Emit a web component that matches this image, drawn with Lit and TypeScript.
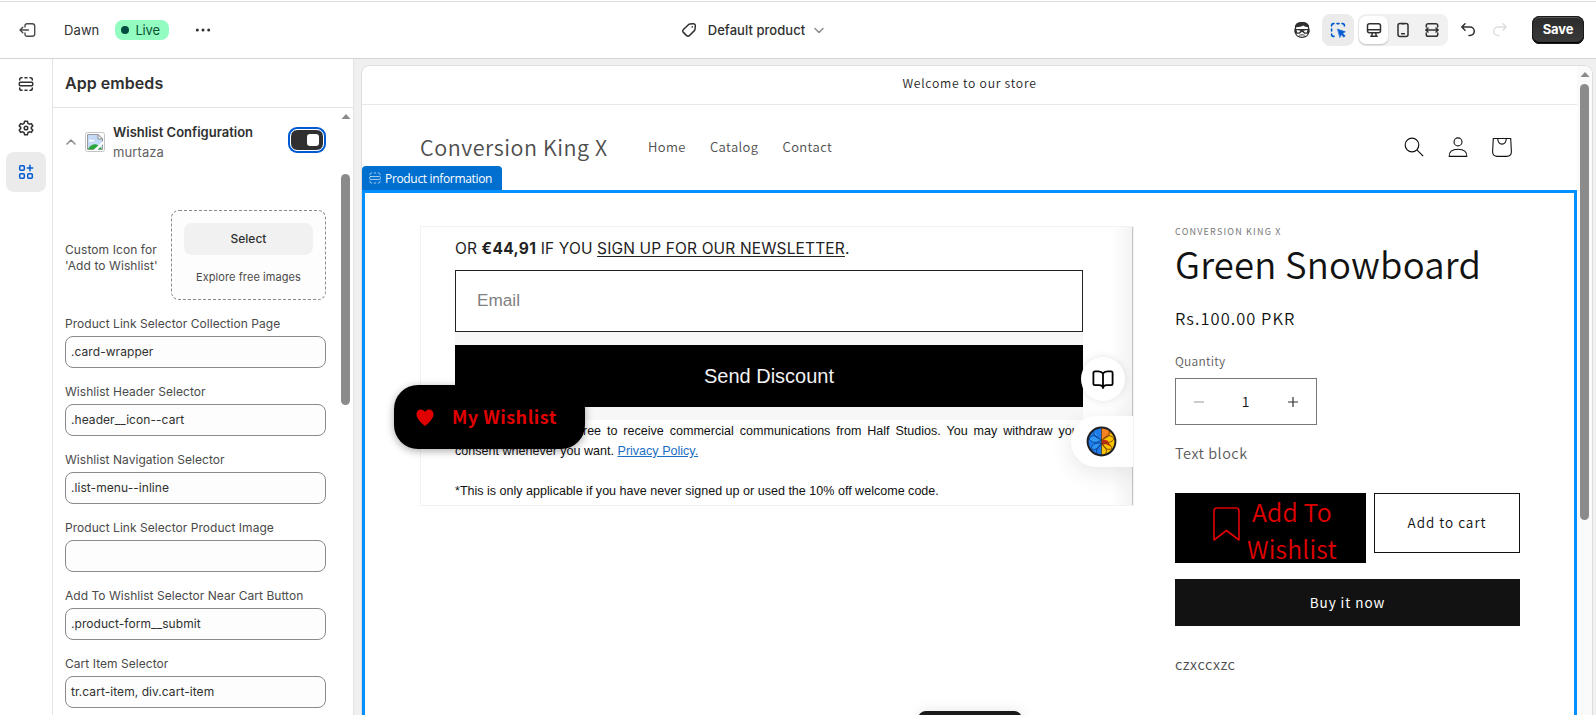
import { LitElement, html, css, svg } from "lit";
import { customElement } from "lit/decorators.js";

const FIELDS: Array<[string, string]> = [
  ["Product Link Selector Collection Page", ".card-wrapper"],
  ["Wishlist Header Selector", ".header__icon--cart"],
  ["Wishlist Navigation Selector", ".list-menu--inline"],
  ["Product Link Selector Product Image", ""],
  ["Add To Wishlist Selector Near Cart Button", ".product-form__submit"],
  ["Cart Item Selector", "tr.cart-item, div.cart-item"],
];

const icon = (size: number, body: unknown, stroke = "#303030", width = 1.5, box = 20) => html`
  <svg width=${size} height=${size} viewBox="0 0 ${box} ${box}" fill="none" stroke=${stroke}
    stroke-width=${width} stroke-linecap="round" stroke-linejoin="round">${body}</svg>`;

const exitIcon = svg`<path d="M7 7V5.800C7 4.500 7.900 3.700 9.200 3.700h5C15.800 3.700 16.700 4.600 16.700 6v8c0 1.400-.9 2.300-2.500 2.300h-5C7.900 16.300 7 15.500 7 14.200V13M10.500 10H2M4.800 7.200L2 10l2.800 2.800"/>`;
const sectionIcon = svg`<path d="M3.700 6V5.500c0-1.100.7-1.800 1.800-1.800H6M9 3.700h2M14 3.700h.5c1.100 0 1.800.7 1.800 1.800V6M3.700 14v.5c0 1.100.7 1.800 1.800 1.800H6M9 16.300h2M14 16.300h.5c1.100 0 1.800-.7 1.800-1.800V14"/><rect x="3.300" y="8.200" width="13.400" height="3.600" rx="1"/>`;
const gearIcon = svg`<path d="M8.600 3.300h2.800l.5 2 1.500.9 2-.6 1.400 2.400-1.500 1.400v1.200l1.500 1.400-1.400 2.400-2-.6-1.500.9-.5 2H8.600l-.5-2-1.500-.9-2 .6-1.400-2.400 1.500-1.400V9.400L3.200 8l1.400-2.400 2 .6 1.500-.9z"/><circle cx="10" cy="10" r="1.800"/>`;
const appsIcon = svg`<rect x="3.700" y="3.700" width="4.600" height="4.600" rx="1"/><rect x="3.700" y="11.700" width="4.600" height="4.600" rx="1"/><rect x="11.700" y="11.700" width="4.600" height="4.600" rx="1"/><path d="M14 3.300v5.400M11.300 6h5.400"/>`;
const tagIcon = svg`<path d="M10.700 4.100l3.600-.3c1.200-.1 2.100.8 2 2l-.3 3.500c0 .5-.2.900-.6 1.300l-4.900 5c-.8.900-2.100.9-2.900 0L4.400 12.400c-.9-.8-.9-2.100 0-2.900l5-4.800c.4-.4.8-.6 1.300-.6z"/><circle cx="13.200" cy="6.900" r=".8" fill="#303030" stroke="none"/>`;
const monitorIcon = svg`<rect x="3.500" y="3.700" width="13" height="9" rx="2"/><path d="M3.700 9.800h12.600M8.300 12.900l-.5 3M11.700 12.900l.5 3M6.800 16.300h6.400"/>`;
const phoneIcon = svg`<rect x="5" y="3.400" width="10" height="13.200" rx="2"/><path d="M8.600 13.800h2.800M9 3.800h2"/>`;
const fullIcon = svg`<path d="M4.300 7V5.600c0-1.100.8-1.900 1.900-1.900h7.600c1.100 0 1.900.8 1.900 1.900V7M4.300 13v1.400c0 1.100.8 1.900 1.900 1.900h7.600c1.100 0 1.900-.8 1.900-1.900V13M3.800 10h12.400M6 8l-2.200 2L6 12M14 8l2.200 2L14 12"/>`;
const undoIcon = svg`<path d="M7 3.800L3.800 7 7 10.200M4 7h8a4.200 4.200 0 0 1 0 8.600h-1"/>`;
const redoIcon = svg`<path d="M13 3.800L16.200 7 13 10.200M16 7H8a4.200 4.200 0 0 0 0 8.600h1"/>`;
const faceIcon = svg`<path d="M3.400 8C3.400 4.400 6 2.700 10 2.700S16.600 4.400 16.600 8v4c0 3-2.600 5.300-6.600 5.300S3.400 15 3.400 12z" fill="#fff" stroke-width="1.300"/><path d="M3.200 7.200C3.400 3.800 6 2.300 10.200 2.300c3.900 0 6.400 1.600 6.600 4.900-2.300 0-4.300-.5-5.600-1.600C9.200 6.800 6.500 7.400 3.200 7.200z" fill="#303030" stroke="none"/><path d="M2.400 9h15.200v3.200l-2 1.500h-3.200L10 11.800l-2.400 1.900H4.400l-2-1.500z" fill="#303030" stroke="none"/><path d="M4.600 10.100l4 .6-1.600 1.900H5.200zM15.400 10.100l-4 .6 1.600 1.900h1.800z" fill="#fff" stroke="none"/><path d="M7.600 15.200c1.500-.6 3.300-.6 4.800 0" stroke-width="1"/>`;
const inspectIcon = svg`<path d="M3.600 6V5.500c0-1.200.7-1.900 1.900-1.900H6M9 3.600h2M14 3.600h.5c1.200 0 1.900.7 1.900 1.900V6M3.600 9v2M3.600 14v.5c0 1.200.7 1.900 1.900 1.900H6"/><path d="M9.700 9.200l7.600 2.600-2.700 1.400 2.600 2.700-1.300 1.300-2.700-2.600-1.200 2.600z" fill="#005bd3" stroke-width=".6"/>`;

@customElement("editor-topbar")
export class EditorTopbar extends LitElement {
  static styles = css`
    :host { display: grid; grid-template-columns: 1fr auto 1fr; align-items: center; height: 57px; margin-top: 1px; box-sizing: border-box;
      border-top: 1px solid #dedede; background: #fff; color: #303030; font: 500 13px/20px Inter, sans-serif; }
    svg { display: block; }
    .left { display: flex; align-items: center; padding-left: 18px; }
    .name { margin-left: 26px; font-weight: 400; font-size: 13px; letter-spacing: .1px; }
    .live { display: flex; align-items: center; gap: 6px; height: 20px; margin-left: 16px; padding: 0 9px 0 6px; border-radius: 8px;
      background: #92fcc1; color: #0c5132; font-weight: 400; letter-spacing: -.15px; }
    .dot { width: 8px; height: 8px; border-radius: 50%; background: #014b40; }
    .more { margin-left: 24px; }
    .title { display: flex; align-items: center; letter-spacing: .05px; font-size: 13px; margin-right: 88px; }
    .title span { margin: 0 4px 0 9px; }
    .right { display: flex; align-items: center; justify-content: flex-end; padding-right: 12px; }
    .inspect { display: flex; align-items: center; justify-content: center; width: 32px; height: 32px; border-radius: 8px; background: #ebebeb; margin: 0 4px 0 10px; }
    .views { display: flex; align-items: center; width: 90px; height: 32px; border-radius: 8px; background: #f1f1f1; }
    .view { display: flex; align-items: center; justify-content: center; width: 29px; height: 28px; }
    .view.on { margin-left: 1px; background: #fff; border-radius: 7px; box-shadow: 0 1px 2px #0003; }
    .undo { margin-left: 10px; }
    .redo { margin-left: 12px; }
    .save { width: 52px; height: 28px; margin-left: 22px; border-radius: 8px; background: linear-gradient(#2b2b2b, #3b3b3b);
      box-shadow: inset 0 0 0 1px #1a1a1a, inset 0 -2px 0 #000, inset 0 2px 0 #555; color: #fff; text-align: center; font: 650 13px/27px Inter, sans-serif; letter-spacing: -.1px; }
  `;
  render() {
    return html`
      <div class="left">${icon(20, exitIcon, "#4a4a4a", 1.4)}<span class="name">Dawn</span>
        <span class="live"><i class="dot"></i>Live</span>
        <svg class="more" width="20" height="20" viewBox="0 0 20 20" fill="#303030"><circle cx="4.300" cy="10" r="1.500"/><circle cx="10" cy="10" r="1.500"/><circle cx="15.700" cy="10" r="1.500"/></svg>
      </div>
      <div class="title">${icon(20, tagIcon)}<span>Default product</span>${icon(20, svg`<path d="M6 8.500l4 4 4-4"/>`, "#8a8a8a")}</div>
      <div class="right">${icon(20, faceIcon)}
        <div class="inspect">${icon(20, inspectIcon, "#005bd3", 1.6)}</div>
        <div class="views"><div class="view on">${icon(20, monitorIcon)}</div><div class="view">${icon(20, phoneIcon)}</div><div class="view">${icon(20, fullIcon)}</div></div>
        <div class="undo">${icon(20, undoIcon)}</div><div class="redo">${icon(20, redoIcon, "#dedede")}</div>
        <div class="save">Save</div>
      </div>`;
  }
}

@customElement("editor-panel")
export class EditorPanel extends LitElement {
  static styles = css`
    :host { display: grid; grid-template-columns: 52px 302px; height: 656px; background: #fff; color: #303030; font: 400 13px/20px Inter, sans-serif; overflow: hidden; }
    svg { display: block; }
    .rail { display: flex; flex-direction: column; align-items: center; gap: 4px; padding-top: 5px; }
    .nav { display: flex; align-items: center; justify-content: center; width: 40px; height: 40px; border-radius: 8px; }
    .nav.on { background: #ebebeb; }
    .panel { border-left: 1px solid #e3e3e3; border-right: 1px solid #e3e3e3; }
    .head { height: 48px; padding-left: 12px; border-bottom: 1px solid #e3e3e3; font: 600 16px/48px Inter, sans-serif; letter-spacing: .05px; }
    .body { display: grid; grid-template-columns: 261px 15px; gap: 12px; padding-left: 12px; }
    .app { display: flex; align-items: center; height: 40px; margin-top: 14px; }
    .chev { margin: 0 4px 0 -4px; }
    .names { flex: 1; margin-left: 8px; white-space: nowrap; letter-spacing: .1px; }
    .names b { display: block; font-weight: 600; letter-spacing: 0; }
    .names span { display: block; color: #616161; }
    .toggle { width: 26px; height: 14px; padding: 3px 4px 3px 2px; border: 1px solid #fff; border-radius: 7px; background: #303030; box-shadow: 0 0 0 2px #005bd3; display: flex; justify-content: flex-end; margin: 0 2px 4px 0; background-clip: padding-box; }
    .knob { width: 12px; height: 12px; margin-top: 1px; border-radius: 3px; background: #fff; }
    .picker { display: flex; align-items: center; justify-content: space-between; height: 90px; margin-top: 48px; }
    .picker p { margin: 6px 0 0; font-size: 12px; line-height: 16px; color: #4a4a4a; white-space: nowrap; letter-spacing: .08px; }
    .drop { box-sizing: border-box; width: 155px; height: 90px; padding: 12px; border: 1px dashed #8a8a8a; border-radius: 8px; background: #fdfdfd; text-align: center; }
    .select { height: 32px; border-radius: 8px; background: #f1f1f1; font: 550 12px/32px Inter, sans-serif; }
    .free { margin-top: 14px; font-size: 11px; line-height: 16px; color: #4a4a4a; letter-spacing: .08px; }
    .fields { display: flex; flex-direction: column; gap: 16px; margin-top: 16px; }
    .label { font-size: 12px; line-height: 16px; margin-bottom: 4px; color: #4a4a4a; white-space: nowrap; letter-spacing: .04px; }
    .input { box-sizing: border-box; height: 32px; padding-left: 5px; border: 1px solid #8a8a8a; border-radius: 8px; background: #fdfdfd; font-size: 12px; line-height: 30px; letter-spacing: .06px; }
    .scroll { display: flex; flex-direction: column; align-items: center; padding-top: 6px; }
    .thumb { width: 9px; height: 231px; margin-top: 55px; border-radius: 5px; background: #8b8b8b; }
  `;
  render() {
    return html`
      <nav class="rail"><div class="nav">${icon(20, sectionIcon)}</div><div class="nav">${icon(20, gearIcon)}</div><div class="nav on">${icon(20, appsIcon, "#005bd3")}</div></nav>
      <section class="panel"><div class="head">App embeds</div>
        <div class="body"><div>
          <div class="app"><div class="chev">${icon(20, svg`<path d="M6 12l4-4 4 4"/>`, "#8a8a8a")}</div>
            <svg width="20" height="20" viewBox="0 0 20 20"><rect x=".5" y=".5" width="19" height="19" rx="2" fill="#fff" stroke="#c4c4c4"/><path d="M2.500 2.500h10.500l4.500 4.500v10.500h-15z" fill="#c5daf7" stroke="#999"/><path d="M4 9c.3-1.500 2-1.800 2.600-.8C8 7 9.500 8 9.300 9.500H4z" fill="#fff"/><path d="M3 17.200c1.500-3.500 5-6 8.500-4.700 2.500.9 4 2.900 5.500 4.700z" fill="#2aa83a"/><path d="M13 2.500V7h4.500z" fill="#fff" stroke="#888"/><path d="M8.500 18L18 9v3l-5.500 6z" fill="#fff"/></svg>
            <div class="names"><b>Wishlist Configuration</b><span>murtaza</span></div>
            <div class="toggle"><i class="knob"></i></div></div>
          <div class="picker"><p>Custom Icon for<br>'Add to Wishlist'</p><div class="drop"><div class="select">Select</div><div class="free">Explore free images</div></div></div>
          <div class="fields">${FIELDS.map(([l, v]) => html`<div><div class="label">${l}</div><div class="input">${v}</div></div>`)}</div>
        </div>
        <div class="scroll"><svg width="10" height="5" viewBox="0 0 10 5" fill="#8b8b8b"><path d="M5 0l4.500 5h-9z"/></svg><div class="thumb"></div></div></div>
      </section>`;
  }
}

@customElement("store-preview")
export class StorePreview extends LitElement {
  static styles = css`
    :host { display: grid; grid-template-columns: 1215px 15px; height: 649px; box-sizing: border-box; overflow: hidden; border-radius: 8px 8px 0 0; background: #fff;
      box-shadow: 0 0 0 1px #dedede; color: #121212; font: 350 15px/20px "Noto Sans CJK SC", sans-serif; }
    svg { display: block; }
    .announce { height: 38px; border-bottom: 1px solid #e8e8e8; text-align: center; font-size: 12.200px; line-height: 34px; letter-spacing: .75px; color: #222; }
    .header { display: flex; align-items: center; box-sizing: border-box; height: 85px; padding: 0 65px 2px 58px; color: #4d4d4d; position: relative; }
    .brand { font-size: 21.500px; line-height: 32px; letter-spacing: .55px; width: 228px; white-space: nowrap; }
    .menu { display: flex; gap: 24px; flex: 1; font-size: 13px; letter-spacing: .4px; }
    .icons { display: flex; gap: 24px; }
    .tag { position: absolute; left: 0; bottom: 0; width: 140px; height: 24px; display: flex; align-items: center; gap: 2px; padding-left: 5px; box-sizing: border-box;
      border-radius: 4px 4px 0 0; background: #006fcf; color: #fff; font: 500 12px/24px "Open Sans", sans-serif; white-space: nowrap; letter-spacing: -.33px; }
    .tag span { padding-top: 1px; }
    .section { display: flex; justify-content: space-between; box-sizing: border-box; height: 560px; border: 3px solid #0090ff; border-bottom: 0; padding: 33px 54px 0 55px; position: relative; }
    .media { box-sizing: border-box; width: 714px; height: 280px; border: 1px solid #f2f2f2; padding: 0 0 0 34px; position: relative; overflow: hidden; background: linear-gradient(90deg, #fff0 690px, #0000000c 711px, #fff0 712px); }
    .or { font: 400 15.500px/22px Inter, sans-serif; color: #222; padding-top: 11px; height: 32px; white-space: nowrap; letter-spacing: .14px; }
    .or b { font-weight: 650; letter-spacing: .3px; }
    .or u { text-underline-offset: 2px; text-decoration-thickness: 1px; }
    .stack { width: 628px; background: #f7f7f7; height: 150px; }
    .email { box-sizing: border-box; height: 62px; border: 1px solid #222; background: #fff; color: #808080; padding-left: 21px; font: 17.200px/59px "Liberation Sans", sans-serif; }
    .send { height: 62px; margin-top: 13px; background: #000; color: #f2f2f2; text-align: center; font: 20px/62px "Liberation Sans", sans-serif; }
    .legal { width: 628px; padding-top: 1px; font: 12.550px/20px "Liberation Sans", sans-serif; color: #111; }
    .just { text-align: justify; text-align-last: justify; white-space: nowrap; padding-left: 114px; }
    .legal a { color: #1a6fc4; text-decoration: underline; }
    .edge { position: absolute; left: 711px; top: 0; width: 1px; height: 278px; background: #c4c4c4; }
    .book { position: absolute; left: 660px; top: 130px; width: 44px; height: 44px; border-radius: 50%; background: #fff; display: flex; align-items: center; justify-content: center; box-shadow: 0 0 8px #0000001c; }
    .brain { position: absolute; left: 650px; top: 189px; width: 63px; height: 51px; border-radius: 26px 0 0 26px; background: #fff; display: flex; align-items: center; padding-left: 15px; box-sizing: border-box; box-shadow: 0 6px 24px #0000001a; }
    .wish { position: absolute; left: 29px; top: 192px; width: 191px; height: 64px; border-radius: 24px; background: #000; box-shadow: 0 2px 8px #0005; color: #e00000; display: flex; align-items: center; gap: 18px; padding: 0 0 2px 22px; box-sizing: border-box;
      font: 700 18px/28px "Noto Sans CJK SC", sans-serif; letter-spacing: .5px; white-space: nowrap; }
    .wish svg { margin-top: 3px; }
    .info { width: 345px; }
    .vendor { font-weight: 400; font-size: 9px; line-height: 12px; letter-spacing: 1.200px; color: #777; }
    h1 { margin: 2px 0 0; font-weight: 350; font-size: 36.500px; line-height: 48px; letter-spacing: .2px; white-space: nowrap; }
    .price { margin-top: 18px; font-size: 16.500px; line-height: 24px; letter-spacing: 1.020px; }
    .qlabel { margin-top: 22px; font-size: 12px; line-height: 18px; letter-spacing: .25px; color: #5a5a5a; }
    .qty { display: flex; align-items: center; justify-content: space-between; box-sizing: border-box; width: 142px; height: 47px; margin-top: 8px; padding: 0 18px; border: 1px solid #777; font-size: 14px; }
    .qty span { margin: -1px 1px 0 0; }
    .block { margin-top: 18px; font-size: 14.500px; line-height: 20px; letter-spacing: .5px; color: #5a5a5a; }
    .row { display: flex; justify-content: space-between; align-items: flex-start; margin-top: 30px; height: 86px; }
    .addwish { width: 191px; height: 70px; background: #000; color: #e00000; display: flex; gap: 7px; padding-left: 38px; box-sizing: border-box; text-align: center; font-size: 24.700px; line-height: 37px; letter-spacing: .22px; }
    .addwish svg { margin-top: 14px; }
    .cart { width: 146px; height: 60px; box-sizing: border-box; border: 1px solid #121212; text-align: center; font-size: 13.500px; line-height: 57px; letter-spacing: 1px; }
    .buy { height: 47px; background: #121212; color: #fff; text-align: center; font-weight: 400; font-size: 13.500px; line-height: 47px; letter-spacing: .95px; }
    .note { margin-top: 28px; font-size: 14.500px; line-height: 20px; letter-spacing: .5px; color: #4d4d4d; }
    .scroll { display: flex; flex-direction: column; align-items: center; background: #fafafa; padding-top: 6px; }
    .thumb { width: 9px; height: 436px; margin-top: 7px; border-radius: 5px; background: #8b8b8b; }
    .toast { position: absolute; left: 553px; top: 518px; width: 104px; height: 30px; border-radius: 8px; background: #1a1a1a; box-shadow: 0 0 14px #0000001a; }
  `;
  render() {
    return html`
      <div><div class="announce">Welcome to our store</div>
        <div class="header"><div class="brand">Conversion King X</div><div class="menu"><span>Home</span><span>Catalog</span><span>Contact</span></div>
          <div class="icons">
            <svg width="20" height="20" viewBox="0 0 20 20" fill="none" stroke="#121212" stroke-width="1.200"><circle cx="8" cy="8" r="6.800"/><path d="M12.900 12.900l6.300 6.300"/></svg>
            <svg width="20" height="20" viewBox="0 0 20 20" fill="none" stroke="#121212" stroke-width="1.100"><circle cx="10" cy="4.900" r="4"/><path d="M1.200 19.400c-.4-4.600 2.700-7.200 8.800-7.200s9.200 2.600 8.800 7.200z"/></svg>
            <svg width="20" height="20" viewBox="0 0 20 20" fill="none" stroke="#121212" stroke-width="1.100"><path d="M1.300 1.500h17.400l.7 13.300c0 3-1.700 4.600-4.600 4.600H5.200c-2.900 0-4.600-1.600-4.600-4.600zM5.700 1.500c.2 3.700 1.800 5.600 4.300 5.600s4.100-1.900 4.300-5.600"/></svg>
          </div>
          <div class="tag">${icon(16, sectionIcon, "#cfe5fb", 1, 20)}<span>Product information</span></div></div>
        <div class="section">
          <div class="media"><div class="or">OR <b>€44,91</b> IF YOU <u>SIGN UP FOR OUR NEWSLETTER</u>.</div>
            <div class="stack"><div class="email">Email</div><div class="send">Send Discount</div></div>
            <div class="legal"><div class="just">agree to receive commercial communications from Half Studios. You may withdraw your</div>
              <div>consent whenever you want. <a>Privacy Policy.</a></div><div>&nbsp;</div><div>*This is only applicable if you have never signed up or used the 10% off welcome code.</div></div>
            <div class="edge"></div>
            <div class="book">${icon(24, svg`<path d="M12 6.500C11 4.900 9.500 4.400 7.500 4.400H4c-1 0-1.600.6-1.600 1.600v10.500c0 1 .6 1.600 1.600 1.600h4.500c1.800 0 2.900.7 3.500 2.400.6-1.700 1.700-2.400 3.500-2.400H20c1 0 1.600-.6 1.600-1.600V6c0-1-.6-1.600-1.600-1.600h-3.500c-2 0-3.500.5-4.500 2.100v14.600"/>`, "#000", 1.8, 24)}</div>
            <div class="brain"><svg width="31" height="31" viewBox="0 0 31 31"><circle cx="15.500" cy="15.500" r="14.200" fill="#1f7bea"/><path d="M15.500 1.300a14.200 14.200 0 0 1 0 28.400z" fill="#f8c400"/><path d="M15.500 2c4 0 7.500 1.500 10 4.500l-4 5-6 2z" fill="#f58220"/><path d="M15.500 13l6 1.500 3.500 6-5.500-2.500-4 1.500z" fill="#dd2418"/><path d="M15 14C10 8 5 9 3 13c4 5 8 4 12 1zM15 17c-5 0-9 1-10 6 5 1 8 0 10-6zM8 5c-1 4 2 7 6 8" fill="#2f97f5" stroke="#0b4390" stroke-width=".9"/><path d="M14 19c-3 2-4 5-3 9" fill="none" stroke="#0b4390"/><path d="M16 14c5-6 10-5 12-1-4 5-8 4-12 1zM16 17c5 0 9 1 10 6-5 1-8 0-10-6zM23 5c1 4-2 7-6 8M17 19c3 2 4 5 3 9" fill="none" stroke="#7a4300" stroke-width=".9"/><path d="M15.500 2v27" stroke="#382a20" stroke-width=".7"/><circle cx="15.500" cy="15.500" r="13.900" fill="none" stroke="#202024" stroke-width="2"/></svg></div>
          </div>
          <div class="info"><div class="vendor">CONVERSION KING X</div><h1>Green Snowboard</h1><div class="price">Rs.100.00 PKR</div>
            <div class="qlabel">Quantity</div>
            <div class="qty"><svg width="10" height="10" stroke="#aaa" stroke-width="1.200"><path d="M0 5h10"/></svg><span>1</span><svg width="10" height="10" stroke="#333" stroke-width="1.200"><path d="M0 5h10M5 0v10"/></svg></div>
            <div class="block">Text block</div>
            <div class="row"><div class="addwish"><svg width="27" height="35" viewBox="0 0 27 35" fill="none" stroke="#e00000" stroke-width="1.600"><path d="M1 33V4c0-2 1-3 3-3h19c2 0 3 1 3 3v29L13.500 23.500z" stroke-linejoin="round"/></svg><span>Add To<br>Wishlist</span></div><div class="cart">Add to cart</div></div>
            <div class="buy">Buy it now</div><div class="note">czxccxzc</div></div>
          <div class="wish"><svg width="18" height="17" viewBox="0 0 18 17" fill="#e00000"><path d="M9 17C5 13.500.5 9.800.5 5.200.5 2.500 2.400.5 4.900.5 6.600.5 8.200 1.400 9 3c.8-1.600 2.400-2.500 4.100-2.500 2.500 0 4.400 2 4.400 4.700C17.500 9.800 13 13.500 9 17z"/></svg>My Wishlist</div>
          <div class="toast"></div>
        </div></div>
      <div class="scroll"><svg width="10" height="5" viewBox="0 0 10 5" fill="#8b8b8b"><path d="M5 0l4.500 5h-9z"/></svg><div class="thumb"></div></div>`;
  }
}

@customElement("app-root")
export class AppRoot extends LitElement {
  static styles = css`
    :host { display: block; width: 1596px; height: 715px; overflow: hidden; background: #fff; }
    .main { display: grid; grid-template-columns: 354px 1230px; column-gap: 8px; height: 657px; box-sizing: border-box; border-top: 1px solid #d4d4d4; background: #f0f0f0; }
    store-preview { margin-top: 7px; }
  `;
  render() {
    return html`<editor-topbar></editor-topbar><div class="main"><editor-panel></editor-panel><store-preview></store-preview></div>`;
  }
}
